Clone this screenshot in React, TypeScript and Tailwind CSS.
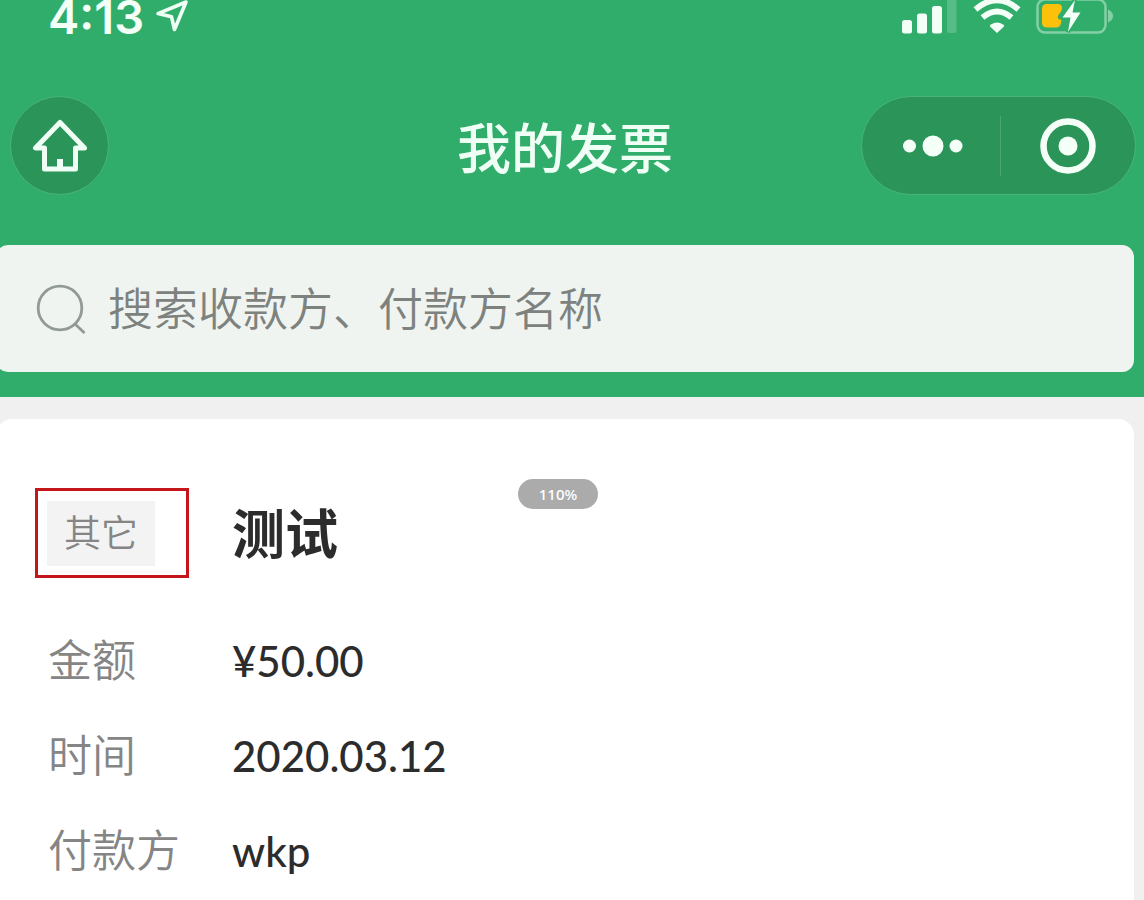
import { useState } from 'react';

const details = [
  { label: '金额', value: '¥50.00' },
  { label: '时间', value: '2020.03.12' },
  { label: '付款方', value: 'wkp' },
];

function LocationArrow() {
  return (
    <svg width="36" height="34" viewBox="0 0 36 34" fill="none" stroke="#f0fff5" strokeWidth="3.6" strokeLinejoin="round">
      <path d="M32 2 L4 13.6 L17.5 16.8 L20.500 29.500 Z" />
    </svg>
  );
}

function Signal() {
  return (
    <svg width="56" height="34" viewBox="0 0 56 34" fill="#f4fff8">
      <rect x="0" y="20" width="10" height="13.5" rx="2.5" />
      <rect x="15" y="13.5" width="10" height="20" rx="2.5" />
      <rect x="30" y="6" width="10" height="27.5" rx="2.5" />
      <rect x="45" y="-4" width="9.5" height="37" rx="2.5" opacity="0.2" />
    </svg>
  );
}

function Wifi() {
  return (
    <svg width="50" height="34" viewBox="0 0 50 34" fill="#f4fff8">
      <path d="M25 33 L18 26.5 Q17.500 25.500 19 24.500 Q25 20.500 31 24.500 Q32.500 25.500 32 26.500 Z" />
      <path d="M10.500 17.500 Q25 5.500 39.500 17.500" fill="none" stroke="#f4fff8" strokeWidth="6" />
      <path d="M3.500 9.500 Q25 -9 46.500 9.500" fill="none" stroke="#f4fff8" strokeWidth="6" />
    </svg>
  );
}

function Battery() {
  return (
    <svg width="78" height="34" viewBox="0 0 78 34" fill="none">
      <rect x="1.5" y="-0.5" width="68" height="33" rx="7.5" stroke="#84cfa5" strokeWidth="2.5" />
      <path d="M72 9.5 Q77 12 77 16 Q77 20 72 22.5 Z" fill="#84cfa5" />
      <path d="M11 4 H22 Q26 4 26 8 Q26 11 22.500 15 Q20 19 25.500 19.500 L25 23 Q24 27.500 20 27.500 H11 Q6 27.500 6 22.500 V9 Q6 4 11 4 Z" fill="#fdc10c" />
      <path d="M39 0 L26.500 17.500 H34.500 L32 32 L44.500 12.500 H36.500 Z" fill="#f4fff8" stroke="#30ad6a" strokeWidth="4" paintOrder="stroke" />
    </svg>
  );
}

export default function App() {
  const [query, setQuery] = useState('');

  return (
    <div className="relative flex min-h-screen flex-col bg-[#f0f0f0] font-['Noto_Sans_CJK_SC',sans-serif] text-[#2c2c2c]">
      <header className="bg-[#30ad6a] pb-[25px]">
        <div className="flex h-[34px] items-end justify-between pl-12 pr-[30px]">
          <div className="flex items-end gap-[10px]">
            <span className="font-['Inter',sans-serif] text-[47px] font-semibold leading-[34px] text-[#f4fff8]">4:13</span>
            <LocationArrow />
          </div>
          <div className="flex items-end gap-[14px]">
            <Signal />
            <Wifi />
            <Battery />
          </div>
        </div>

        <nav className="grid grid-cols-[1fr_auto_1fr] items-center pl-[10px] pr-2 pt-[62px]">
          <button aria-label="首页" className="flex size-[99px] items-center justify-center rounded-full border border-[#48b57a] bg-[#2b9459]">
            <svg width="56" height="54" viewBox="0 0 56 54" fill="none" stroke="#f0fff5" strokeWidth="5" strokeLinejoin="round">
              <path d="M28 3.500 L3.500 29 H12.500 V50 H43.500 V29 H52.500 Z" />
              <path d="M28 50 V40" strokeWidth="6" />
            </svg>
          </button>
          <h1 className="pr-4 text-[54px] font-medium leading-[80px] text-[#f0fff5]">我的发票</h1>
          <div className="flex h-[99px] w-[275px] items-center justify-self-end rounded-full border border-[#48b57a] bg-[#2b9459]">
            <button aria-label="更多" className="flex h-[60px] flex-1 items-center justify-center border-r border-[#48a870] pl-1">
              <svg width="60" height="22" viewBox="0 0 60 22" fill="#f4fff8">
                <circle cx="6.500" cy="11" r="6.500" />
                <circle cx="30" cy="11" r="10.500" />
                <circle cx="53" cy="11" r="6.500" />
              </svg>
            </button>
            <button aria-label="关闭" className="flex h-[60px] flex-1 items-center justify-center">
              <svg width="56" height="56" viewBox="0 0 56 56">
                <circle cx="28" cy="28" r="24.500" fill="none" stroke="#f4fff8" strokeWidth="6.500" />
                <circle cx="28" cy="28" r="9.500" fill="#f4fff8" />
              </svg>
            </button>
          </div>
        </nav>

        <label className="-ml-1 mr-[10px] mt-[50px] flex h-[127px] items-center gap-[22px] rounded-xl bg-[#eff4f0] pl-10">
          <svg width="50" height="50" viewBox="0 0 50 50" fill="none" stroke="#929a95" strokeWidth="2.8" className="shrink-0">
            <circle cx="24" cy="24" r="21.8" />
            <path d="M38.5 39.5 L48.5 49" />
          </svg>
          <input
            type="text"
            value={query}
            onChange={(e) => setQuery(e.target.value)}
            placeholder="搜索收款方、付款方名称"
            aria-label="搜索收款方、付款方名称"
            className="h-20 min-w-0 flex-1 bg-transparent pb-1 text-[45px] font-[350] outline-none placeholder:text-[#7d827f]"
          />
        </label>
      </header>

      <main className="-ml-1 mr-[10px] mt-[22px] flex-1 rounded-t-2xl bg-white pl-[52px] pt-[69px]">
        <div className="flex items-center">
          <div className="-ml-[13px] mr-[43px] flex h-[90px] w-[154px] items-center border-3 border-[#c4161a] px-[9px]">
            <span className="bg-[#f3f3f3] px-[17px] pb-1 text-[37px] font-[350] leading-[61px] text-[#858585]">其它</span>
          </div>
          <h2 className="pb-1 text-[53px] font-bold leading-[80px]">测试</h2>
        </div>

        <dl className="mt-[35px]">
          {details.map((item) => (
            <div key={item.label} className="flex h-[95px] items-center">
              <dt className="w-[184px] pb-[6px] text-[44px] font-[350] leading-[64px] text-[#858585]">{item.label}</dt>
              <dd className="font-['Lato',sans-serif] text-[42px] font-medium leading-[64px]">{item.value}</dd>
            </div>
          ))}
        </dl>
      </main>

      <div className="absolute left-1/2 top-[479px] -ml-[54px] flex h-[30px] w-20 items-center justify-center rounded-full bg-[#ababab] font-['Noto_Sans',sans-serif] text-[15px] font-medium text-white">
        110%
      </div>
    </div>
  );
}
